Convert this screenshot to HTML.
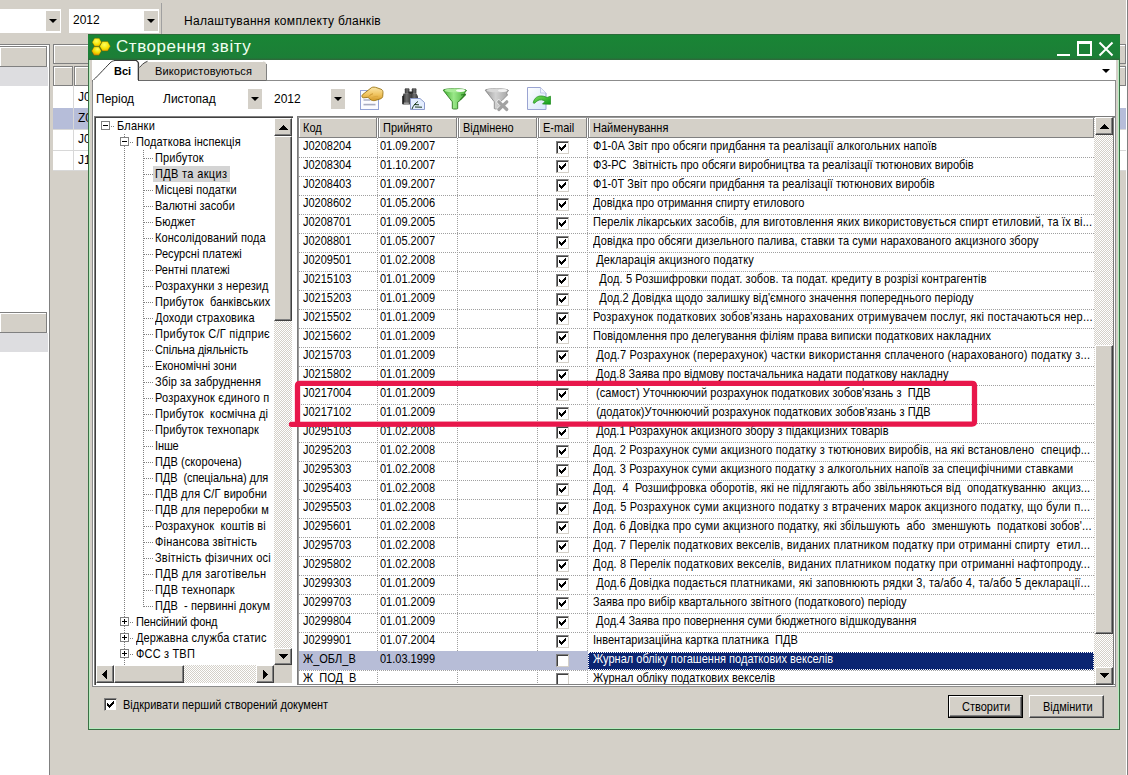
<!DOCTYPE html>
<html><head><meta charset="utf-8">
<style>
*{box-sizing:border-box;margin:0;padding:0}
html,body{width:1128px;height:775px;overflow:hidden;background:#d4d0c8;font-family:"Liberation Sans",sans-serif;font-size:11px;color:#000}
.a{position:absolute}
.t{position:absolute;white-space:pre;line-height:13px}
.sy{transform:scaleY(1.125);transform-origin:0 3px}
.btn3d{position:absolute;background:#d4d0c8;border-top:1px solid #fff;border-left:1px solid #fff;border-right:1px solid #404040;border-bottom:1px solid #404040;box-shadow:inset -1px -1px 0 #808080}
.cb{position:absolute;width:13px;height:13px;background:#fff;border-top:1px solid #808080;border-left:1px solid #808080;border-right:1px solid #d4d0c8;border-bottom:1px solid #d4d0c8;box-shadow:inset 1px 1px 0 #404040}
.cb svg{left:2px!important;top:2px!important}
.dh{position:absolute;height:1px;background-image:linear-gradient(90deg,#a0a0a0 50%,transparent 50%);background-size:2px 1px}
.dv{position:absolute;width:1px;background-image:linear-gradient(180deg,#a0a0a0 50%,transparent 50%);background-size:1px 2px}
.tdv{position:absolute;width:1px;background-image:linear-gradient(180deg,#808080 50%,transparent 50%);background-size:1px 2px}
.tdh{position:absolute;height:1px;background-image:linear-gradient(90deg,#808080 50%,transparent 50%);background-size:2px 1px}
.tri-d{position:absolute;width:0;height:0;border-left:4px solid transparent;border-right:4px solid transparent;border-top:4px solid #000}
.tri-u{position:absolute;width:0;height:0;border-left:4px solid transparent;border-right:4px solid transparent;border-bottom:4px solid #000}
.tri-l{position:absolute;width:0;height:0;border-top:4px solid transparent;border-bottom:4px solid transparent;border-right:4px solid #000}
.tri-r{position:absolute;width:0;height:0;border-top:4px solid transparent;border-bottom:4px solid transparent;border-left:4px solid #000}
.checker{background-color:#fff;background-image:linear-gradient(45deg,#d4d0c8 25%,transparent 25%,transparent 75%,#d4d0c8 75%),linear-gradient(45deg,#d4d0c8 25%,transparent 25%,transparent 75%,#d4d0c8 75%);background-size:2px 2px;background-position:0 0,1px 1px}
</style></head><body>

<div class="a" style="left:0;top:9px;width:61px;height:24px;background:#fff"></div>
<div class="a" style="left:46px;top:11px;width:14px;height:20px;background:#d4d0c8"></div><div class="tri-d" style="left:49px;top:19px"></div>
<div class="a" style="left:69px;top:9px;width:90px;height:24px;background:#fff"></div>
<div class="t" style="left:73px;top:14px;font-size:12px">2012</div>
<div class="a" style="left:144px;top:11px;width:14px;height:20px;background:#d4d0c8"></div><div class="tri-d" style="left:147px;top:19px"></div>
<div class="a" style="left:161px;top:3px;width:1px;height:31px;background:#a0a0a0"></div>
<div class="t" style="left:184px;top:15px;font-size:12px;letter-spacing:0.3px">Налаштування комплекту бланків</div>
<div class="a" style="left:0;top:44px;width:49px;height:731px;background:#fff"></div>
<div class="a" style="left:0;top:44px;width:50px;height:1px;background:#808080"></div>
<div class="a" style="left:49px;top:44px;width:1px;height:731px;background:#808080"></div>
<div class="a" style="left:-1px;top:46px;width:48px;height:21px;background:#d4d0c8;border:1px solid #808080;box-shadow:inset 1px 1px 0 #fff"></div>
<div class="a" style="left:0;top:67px;width:48px;height:19px;background:#dddde0"></div>
<div class="a" style="left:-1px;top:312px;width:48px;height:21px;background:#d4d0c8;border:1px solid #808080;box-shadow:inset 1px 1px 0 #fff"></div>
<div class="a" style="left:0;top:333px;width:48px;height:19px;background:#dddde0"></div>
<div class="a" style="left:53px;top:44px;width:1073px;height:20px;background:#d4d0c8;border:1px solid #808080;box-shadow:inset 1px 1px 0 #fff"></div>
<div class="a" style="left:53px;top:66px;width:20px;height:20px;background:#d4d0c8;border:1px solid #808080;box-shadow:inset 1px 1px 0 #fff"></div>
<div class="a" style="left:74px;top:66px;width:1052px;height:20px;background:#d4d0c8;border:1px solid #808080;box-shadow:inset 1px 1px 0 #fff"></div>
<div class="a" style="left:53px;top:86px;width:1073px;height:85px;background:#fff"></div>
<div class="a" style="left:53px;top:108px;width:1073px;height:22px;background:#b6bdd9"></div>
<div class="a" style="left:53px;top:129px;width:1073px;height:1px;background:#d8d8d8"></div>
<div class="a" style="left:53px;top:150px;width:1073px;height:1px;background:#d8d8d8"></div>
<div class="a" style="left:53px;top:170px;width:1073px;height:1px;background:#d8d8d8"></div>
<div class="a" style="left:73px;top:86px;width:1px;height:85px;background:#d8d8d8"></div>
<div class="t" style="left:78px;top:91px;font-size:12px">J0</div>
<div class="t" style="left:78px;top:112px;font-size:12px">Z0</div>
<div class="t" style="left:78px;top:133px;font-size:12px">J0</div>
<div class="t" style="left:78px;top:154px;font-size:12px">J1</div>
<div class="a" style="left:1126px;top:0;width:1px;height:775px;background:#fff"></div><div class="a" style="left:1127px;top:0;width:1px;height:775px;background:#808080"></div>
<div class="a" style="left:88px;top:34px;width:1032px;height:696px;background:#d4d0c8;border:1px solid #3a7044"></div>
<div class="a" style="left:89px;top:59px;width:1030px;height:670px;border:1px solid #b8ecc0;border-top:none"></div>
<div class="a" style="left:88px;top:34px;width:1032px;height:26px;background:linear-gradient(180deg,#2b6b3a 0px,#2b6b3a 1px,#198535 1px,#1c7e37 24px,#2b6b3a 25px,#2b6b3a 26px)"></div>
<div class="t" style="left:116px;top:38px;font-size:17px;line-height:18px;letter-spacing:0.55px;color:#f0fff0">Створення звіту</div>
<svg class="a" style="left:88px;top:34px" width="26" height="26" viewBox="88 34 26 26">
<defs><radialGradient id="hg" cx="45%" cy="35%" r="75%"><stop offset="0" stop-color="#fbff60"/><stop offset="0.6" stop-color="#f5e000"/><stop offset="1" stop-color="#e89000"/></radialGradient>
<radialGradient id="hg2" cx="60%" cy="30%" r="80%"><stop offset="0" stop-color="#fbff60"/><stop offset="0.5" stop-color="#f5dc00"/><stop offset="1" stop-color="#e87a00"/></radialGradient></defs>
<polygon points="110.40,46.20 107.70,50.88 102.30,50.88 99.60,46.20 102.30,41.52 107.70,41.52" fill="url(#hg)" stroke="#6a5a00" stroke-width="0.7" stroke-opacity="0.6"/>
<polygon points="101.60,42.30 99.25,46.37 94.55,46.37 92.20,42.30 94.55,38.23 99.25,38.23" fill="url(#hg)" stroke="#6a5a00" stroke-width="0.7" stroke-opacity="0.6"/>
<polygon points="101.40,51.00 98.95,55.24 94.05,55.24 91.60,51.00 94.05,46.76 98.95,46.76" fill="url(#hg2)" stroke="#6a5a00" stroke-width="0.7" stroke-opacity="0.6"/>
</svg>
<div class="a" style="left:1057px;top:54px;width:13px;height:2px;background:#fff"></div>
<div class="a" style="left:1077px;top:41px;width:15px;height:15px;border:2px solid #fff;border-top-width:3px"></div>
<svg class="a" style="left:1098px;top:41px" width="16" height="16"><path d="M1.5 1.5L14.5 14.5M14.5 1.5L1.5 14.5" stroke="#fff" stroke-width="2"/></svg>
<div class="a" style="left:92px;top:60px;width:1024px;height:627px;background:#fff"></div>
<div class="a" style="left:92px;top:80px;width:1024px;height:607px;border:1px solid #8c8c8c;border-top:1px solid #8c8c8c"></div>
<svg class="a" style="left:88px;top:58px" width="190" height="26" viewBox="88 58 190 26">
<path d="M92.5 81 C95 79, 105 68, 110 63 C111.5 61.5, 113 60.8, 115 60.5 L138 60.5 L138 81 Z" fill="#fff"/>
<path d="M92.5 80.8 C95 79, 105 68, 110 63 C111.5 61.5, 113 60.8, 115 60.5" stroke="#383838" stroke-width="1" fill="none"/>
<path d="M114 60.5 L136.5 60.5 L138.3 62.5 L138.3 80.5" stroke="#3a3a3a" stroke-width="1.2" fill="none"/><path d="M138.6 63 L138.6 80.5" stroke="#3a3a3a" stroke-width="1" fill="none"/>
<path d="M139 80.5 L139 67.5 C141 65.5, 144 62.5, 147.5 61.5 L263 61.5 Q266.5 61.5 266.5 65 L266.5 80.5 Z" fill="#d4d0c8"/>
<path d="M147.5 61.5 L263 61.5" stroke="#fff" stroke-width="1" fill="none"/>
<path d="M139.5 67.5 C141 65.5, 144 62.5, 147.5 61.3" stroke="#404040" stroke-width="1" fill="none"/>
<path d="M266.5 64 L266.5 80.5" stroke="#808080" stroke-width="1" fill="none"/>
<path d="M139 80.5 L266.5 80.5" stroke="#6a6a6a" stroke-width="1" fill="none"/>
</svg>
<div class="a" style="left:93px;top:80px;width:45px;height:1px;background:#fff"></div>
<div class="t" style="left:114px;top:65px;font-weight:bold">Всі</div>
<div class="t" style="left:155px;top:65px;letter-spacing:0.15px">Використовуються</div>
<div class="tri-d" style="left:1102px;top:69px"></div>
<div class="t" style="left:96px;top:93px;font-size:12px">Період</div>
<div class="t" style="left:163px;top:93px;font-size:12px">Листопад</div>
<div class="a" style="left:248px;top:89px;width:14px;height:20px;background:#d4d0c8"></div><div class="tri-d" style="left:251px;top:97px"></div>
<div class="t" style="left:274px;top:93px;font-size:12px">2012</div>
<div class="a" style="left:331px;top:89px;width:14px;height:20px;background:#d4d0c8"></div><div class="tri-d" style="left:334px;top:97px"></div>
<svg class="a" style="left:356px;top:84px" width="200" height="28" viewBox="356 84 200 28">
<defs>
<linearGradient id="hand" x1="0" y1="0" x2="0" y2="1"><stop offset="0" stop-color="#fbe7a8"/><stop offset="0.55" stop-color="#f0c460"/><stop offset="1" stop-color="#d49a28"/></linearGradient>
<linearGradient id="gfun" x1="0" y1="0" x2="1" y2="0"><stop offset="0" stop-color="#3fae2e"/><stop offset="0.45" stop-color="#9be88a"/><stop offset="1" stop-color="#48b038"/></linearGradient>
<linearGradient id="grfun" x1="0" y1="0" x2="1" y2="0"><stop offset="0" stop-color="#9a9a9a"/><stop offset="0.45" stop-color="#d2d2d2"/><stop offset="1" stop-color="#a4a4a4"/></linearGradient>
<linearGradient id="docb" x1="0" y1="0" x2="1" y2="1"><stop offset="0" stop-color="#ffffff"/><stop offset="1" stop-color="#d6e6fa"/></linearGradient>
<linearGradient id="garr" x1="0" y1="0" x2="1" y2="1"><stop offset="0" stop-color="#7ee05a"/><stop offset="1" stop-color="#0d9a1a"/></linearGradient>
</defs>
<!-- icon1: document with hand -->
<rect x="360.5" y="90.5" width="18" height="19" fill="#fbfcff" stroke="#93a3d6"/>
<rect x="363.5" y="99.3" width="7" height="1.4" fill="#a8acc0"/>
<rect x="363.5" y="103.8" width="12" height="1.6" fill="#a8acc0"/>
<path d="M362 96.8 C361.5 95.5 362.5 94.5 364 93.5 L371.5 87.6 C373 86.8 375 87 377 87.8 L381 89.2 C382.5 89.8 383 91 383 92.5 L382.7 96.5 C382.5 97.8 381.5 98.5 380 99 L376 100.2 C374.5 100.8 373 100.8 371.5 100.2 L369.5 98.8 C369 97.8 368 97.3 367 97.5 L363.5 97.8 C362.8 97.8 362.2 97.4 362 96.8 Z" fill="url(#hand)" stroke="#9a7414" stroke-width="0.9"/>
<path d="M368.8 96.5 C370 95 371.5 94 373 93.8" stroke="#c08a28" stroke-width="0.8" fill="none"/>
<path d="M372.5 97.5 C374 96.5 376 96.3 378 96.5" stroke="#d09a30" stroke-width="0.6" fill="none" opacity="0.7"/>
<!-- icon2: binoculars + doc -->
<defs><linearGradient id="bin" x1="0" y1="0" x2="1" y2="0"><stop offset="0" stop-color="#2e2e2e"/><stop offset="0.5" stop-color="#6e6e6e"/><stop offset="1" stop-color="#3a3a3a"/></linearGradient></defs>
<rect x="404.8" y="88.3" width="4.6" height="5.5" rx="1" fill="url(#bin)"/>
<rect x="411.8" y="88.3" width="4.6" height="5.5" rx="1" fill="url(#bin)"/>
<rect x="408.5" y="91.5" width="4.5" height="3" fill="#2a2a2a"/>
<path d="M403.5 93.5 h6.5 l0.8 2 v9 h-8.2 v-8 z" fill="url(#bin)"/>
<path d="M410.5 93.5 h6 l1.5 3 v3 h-7.5 z" fill="url(#bin)"/>
<rect x="402.3" y="96" width="1.6" height="8" fill="#1e1e1e"/>
<rect x="403.8" y="102.5" width="5" height="2" fill="#9a9a9a"/>
<path d="M410.5 98.5h9.5l4.5 4v7h-14z" fill="#e4eeff" stroke="#8d9ccd" stroke-width="1"/>
<path d="M412 109 C413 106 415.5 103 418 101.5 M414 104.5 L419 104.8 M415 107 L422 107.2" stroke="#1a3a1a" stroke-width="1" fill="none"/>
<!-- icon3: green funnel -->
<path d="M443.2 90.2 C443.5 88.3 466 88.1 466.5 90.5 L464.5 93 L465.5 95 L460 100.5 L457.7 102 V108.6 C457.7 109.2 452.3 109.2 452.3 108.6 V101.8 Z" fill="url(#gfun)" stroke="#2f7e22" stroke-width="0.9"/>
<ellipse cx="455" cy="90.4" rx="10.5" ry="1.9" fill="#a8ec98"/>
<ellipse cx="460.5" cy="90.6" rx="4.5" ry="1.3" fill="#ffffff" opacity="0.9"/>
<path d="M461 95 L465 94.5 L460 100" stroke="#2c7a22" stroke-width="1.1" fill="none"/>
<!-- icon4: gray funnel + X -->
<path d="M485.2 90.2 C485.5 88.3 508 88.1 508.5 90.5 L506.5 93 L507.5 95 L502 100.5 L499.7 102 V108.6 C499.7 109.2 494.3 109.2 494.3 108.6 V101.8 Z" fill="url(#grfun)" stroke="#8a8a8a" stroke-width="0.9"/>
<ellipse cx="497" cy="90.4" rx="10.5" ry="1.9" fill="#d8d8d8"/>
<ellipse cx="502.5" cy="90.6" rx="4.5" ry="1.3" fill="#f4f4f4" opacity="0.9"/>
<path d="M498.8 101.8 L506.8 109.5 M506.8 101.8 L498.8 109.5" stroke="#ffffff" stroke-width="4.6" stroke-linecap="round" opacity="0.7"/>
<path d="M498.8 101.8 L506.8 109.5 M506.8 101.8 L498.8 109.5" stroke="#a2a2a2" stroke-width="3.2" stroke-linecap="round"/>
<!-- icon5: doc + green arrow -->
<path d="M527.5 87.5h13l5.5 5.5v16.5h-18.5z" fill="url(#docb)" stroke="#9aa4d2" stroke-width="1"/>
<path d="M540.5 87.5v5.5h5.5" fill="#f0f4ff" stroke="#b8c0e0" stroke-width="0.8"/>
<path d="M533.3 102.6 C534 98 538 95.5 542 96 C544.5 96.3 546 97 547 97.5 L550.5 96.2 L550.5 104.3 L542.5 104 L545 101.5 C543 99.5 540 99.5 538 100.5 C536.5 101.3 535.5 102.5 535 103 C534.3 103.5 533.2 103.4 533.3 102.6 Z" fill="url(#garr)" stroke="#1a8a1a" stroke-width="0.7"/>
</svg>

<div class="a" style="left:94px;top:116px;width:199px;height:569px;background:#fff;border-top:1px solid #808080;border-left:1px solid #808080;box-shadow:inset 1px 1px 0 #404040"></div>
<div class="a checker" style="left:274px;top:118px;width:18px;height:547px"></div>
<div class="btn3d" style="left:274px;top:118px;width:18px;height:18px"></div><svg class="a" style="left:279px;top:125px" width="9" height="5"><path d="M4 0h1v1h-1zM3 1h3v1h-3zM2 2h5v1h-5zM1 3h7v1h-7zM0 4h9v1h-9z" fill="#000"/></svg>
<div class="btn3d" style="left:274px;top:136px;width:18px;height:185px"></div>
<div class="btn3d" style="left:274px;top:648px;width:18px;height:17px"></div><svg class="a" style="left:279px;top:654px" width="9" height="5"><path d="M0 0h9v1h-9zM1 1h7v1h-7zM2 2h5v1h-5zM3 3h3v1h-3zM4 4h1v1h-1z" fill="#000"/></svg>
<div class="a checker" style="left:96px;top:665px;width:178px;height:18px"></div>
<div class="btn3d" style="left:96px;top:665px;width:18px;height:18px"></div><svg class="a" style="left:102px;top:670px" width="5" height="9"><path d="M4 0h1v9h-1zM3 1h1v7h-1zM2 2h1v5h-1zM1 3h1v3h-1zM0 4h1v1h-1z" fill="#000"/></svg>
<div class="btn3d" style="left:114px;top:665px;width:70px;height:18px"></div>
<div class="btn3d" style="left:256px;top:665px;width:18px;height:18px"></div><svg class="a" style="left:263px;top:670px" width="5" height="9"><path d="M0 0h1v9h-1zM1 1h1v7h-1zM2 2h1v5h-1zM3 3h1v3h-1zM4 4h1v1h-1z" fill="#000"/></svg>
<div class="a" style="left:274px;top:665px;width:18px;height:18px;background:#d4d0c8"></div>
<div class="a" style="left:96px;top:118px;width:178px;height:547px;overflow:hidden">
<div class="tdv" style="left:28px;top:16px;width:1px;height:3px"></div>
<div class="tdv" style="left:28px;top:28px;width:1px;height:524px"></div>
<div class="tdv" style="left:47px;top:32px;width:1px;height:457px"></div>
<div class="t tr sy" style="left:21px;top:1px;letter-spacing:0.226px">Бланки</div>
<div class="a" style="left:5px;top:3px;width:9px;height:9px;border:1px solid #808080;background:#fff"></div>
<div class="a" style="left:7px;top:7px;width:5px;height:1px;background:#000"></div>
<div class="tdh" style="left:15px;top:8px;width:4px"></div>
<div class="t tr sy" style="left:40px;top:17px;letter-spacing:0.107px">Податкова інспекція</div>
<div class="a" style="left:24px;top:19px;width:9px;height:9px;border:1px solid #808080;background:#fff"></div>
<div class="a" style="left:26px;top:23px;width:5px;height:1px;background:#000"></div>
<div class="tdh" style="left:34px;top:24px;width:4px"></div>
<div class="t tr sy" style="left:59px;top:33px;letter-spacing:0.146px">Прибуток</div>
<div class="tdh" style="left:48px;top:40px;width:9px"></div>
<div class="a" style="left:57px;top:48px;width:77px;height:16px;background:#d4d4d4"></div>
<div class="t tr sy" style="left:59px;top:49px;letter-spacing:0.339px">ПДВ та акциз</div>
<div class="tdh" style="left:48px;top:56px;width:9px"></div>
<div class="t tr sy" style="left:59px;top:65px;letter-spacing:0.059px">Місцеві податки</div>
<div class="tdh" style="left:48px;top:72px;width:9px"></div>
<div class="t tr sy" style="left:59px;top:81px;letter-spacing:-0.003px">Валютні засоби</div>
<div class="tdh" style="left:48px;top:88px;width:9px"></div>
<div class="t tr sy" style="left:59px;top:97px;letter-spacing:0.121px">Бюджет</div>
<div class="tdh" style="left:48px;top:104px;width:9px"></div>
<div class="t tr sy" style="left:59px;top:113px;letter-spacing:0.082px">Консолідований пода</div>
<div class="tdh" style="left:48px;top:120px;width:9px"></div>
<div class="t tr sy" style="left:59px;top:129px;letter-spacing:0.052px">Ресурсні платежі</div>
<div class="tdh" style="left:48px;top:136px;width:9px"></div>
<div class="t tr sy" style="left:59px;top:145px;letter-spacing:0.013px">Рентні платежі</div>
<div class="tdh" style="left:48px;top:152px;width:9px"></div>
<div class="t tr sy" style="left:59px;top:161px;letter-spacing:0.126px">Розрахунки з нерезид</div>
<div class="tdh" style="left:48px;top:168px;width:9px"></div>
<div class="t tr sy" style="left:59px;top:177px;letter-spacing:0.130px">Прибуток&nbsp; банківських</div>
<div class="tdh" style="left:48px;top:184px;width:9px"></div>
<div class="t tr sy" style="left:59px;top:193px;letter-spacing:0.108px">Доходи страховика</div>
<div class="tdh" style="left:48px;top:200px;width:9px"></div>
<div class="t tr sy" style="left:59px;top:209px;letter-spacing:0.284px">Прибуток С/Г підприє</div>
<div class="tdh" style="left:48px;top:216px;width:9px"></div>
<div class="t tr sy" style="left:59px;top:225px;letter-spacing:-0.129px">Спільна діяльність</div>
<div class="tdh" style="left:48px;top:232px;width:9px"></div>
<div class="t tr sy" style="left:59px;top:241px;letter-spacing:0.039px">Економічні зони</div>
<div class="tdh" style="left:48px;top:248px;width:9px"></div>
<div class="t tr sy" style="left:59px;top:257px;letter-spacing:0.100px">Збір за забруднення</div>
<div class="tdh" style="left:48px;top:264px;width:9px"></div>
<div class="t tr sy" style="left:59px;top:273px;letter-spacing:0.196px">Розрахунок єдиного п</div>
<div class="tdh" style="left:48px;top:280px;width:9px"></div>
<div class="t tr sy" style="left:59px;top:289px;letter-spacing:0.140px">Прибуток&nbsp; космічна ді</div>
<div class="tdh" style="left:48px;top:296px;width:9px"></div>
<div class="t tr sy" style="left:59px;top:305px;letter-spacing:0.093px">Прибуток технопарк</div>
<div class="tdh" style="left:48px;top:312px;width:9px"></div>
<div class="t tr sy" style="left:59px;top:321px;letter-spacing:-0.126px">Інше</div>
<div class="tdh" style="left:48px;top:328px;width:9px"></div>
<div class="t tr sy" style="left:59px;top:337px;letter-spacing:0.073px">ПДВ (скорочена)</div>
<div class="tdh" style="left:48px;top:344px;width:9px"></div>
<div class="t tr sy" style="left:59px;top:353px;letter-spacing:-0.078px">ПДВ&nbsp; (спеціальна) для</div>
<div class="tdh" style="left:48px;top:360px;width:9px"></div>
<div class="t tr sy" style="left:59px;top:369px;letter-spacing:0.091px">ПДВ для С/Г виробни</div>
<div class="tdh" style="left:48px;top:376px;width:9px"></div>
<div class="t tr sy" style="left:59px;top:385px;letter-spacing:0.098px">ПДВ для переробки м</div>
<div class="tdh" style="left:48px;top:392px;width:9px"></div>
<div class="t tr sy" style="left:59px;top:401px;letter-spacing:0.095px">Розрахунок&nbsp; коштів ві</div>
<div class="tdh" style="left:48px;top:408px;width:9px"></div>
<div class="t tr sy" style="left:59px;top:417px;letter-spacing:0.179px">Фінансова звітність</div>
<div class="tdh" style="left:48px;top:424px;width:9px"></div>
<div class="t tr sy" style="left:59px;top:433px;letter-spacing:0.225px">Звітність фізичних осі</div>
<div class="tdh" style="left:48px;top:440px;width:9px"></div>
<div class="t tr sy" style="left:59px;top:449px;letter-spacing:0.311px">ПДВ для заготівельн</div>
<div class="tdh" style="left:48px;top:456px;width:9px"></div>
<div class="t tr sy" style="left:59px;top:465px;letter-spacing:0.204px">ПДВ технопарк</div>
<div class="tdh" style="left:48px;top:472px;width:9px"></div>
<div class="t tr sy" style="left:59px;top:481px;letter-spacing:0.062px">ПДВ&nbsp; - первинні докум</div>
<div class="tdh" style="left:48px;top:488px;width:9px"></div>
<div class="t tr sy" style="left:40px;top:497px;letter-spacing:-0.137px">Пенсійний фонд</div>
<div class="a" style="left:24px;top:499px;width:9px;height:9px;border:1px solid #808080;background:#fff"></div>
<div class="a" style="left:26px;top:503px;width:5px;height:1px;background:#000"></div>
<div class="a" style="left:28px;top:501px;width:1px;height:5px;background:#000"></div>
<div class="tdh" style="left:34px;top:504px;width:4px"></div>
<div class="t tr sy" style="left:40px;top:513px;letter-spacing:0.139px">Державна служба статис</div>
<div class="a" style="left:24px;top:515px;width:9px;height:9px;border:1px solid #808080;background:#fff"></div>
<div class="a" style="left:26px;top:519px;width:5px;height:1px;background:#000"></div>
<div class="a" style="left:28px;top:517px;width:1px;height:5px;background:#000"></div>
<div class="tdh" style="left:34px;top:520px;width:4px"></div>
<div class="t tr sy" style="left:40px;top:529px;letter-spacing:0.178px">ФСС з ТВП</div>
<div class="a" style="left:24px;top:531px;width:9px;height:9px;border:1px solid #808080;background:#fff"></div>
<div class="a" style="left:26px;top:535px;width:5px;height:1px;background:#000"></div>
<div class="a" style="left:28px;top:533px;width:1px;height:5px;background:#000"></div>
<div class="tdh" style="left:34px;top:536px;width:4px"></div>
</div>
<div class="a" style="left:297px;top:116px;width:818px;height:569px;background:#fff;border-top:1px solid #7a7a7a;border-left:1px solid #7a7a7a;border-bottom:1px solid #808080;box-shadow:inset 1px 1px 0 #9a9a9a"></div>
<div class="a" style="left:298px;top:118px;width:79px;height:20px;background:#d4d0c8;border-left:1px solid #808080;border-right:1px solid #808080;border-bottom:1px solid #808080;box-shadow:inset 1px 1px 0 #fff"></div>
<div class="t sy" style="left:303px;top:121px">Код</div>
<div class="a" style="left:378px;top:118px;width:79px;height:20px;background:#d4d0c8;border-left:1px solid #808080;border-right:1px solid #808080;border-bottom:1px solid #808080;box-shadow:inset 1px 1px 0 #fff"></div>
<div class="t sy" style="left:383px;top:121px">Прийнято</div>
<div class="a" style="left:458px;top:118px;width:79px;height:20px;background:#d4d0c8;border-left:1px solid #808080;border-right:1px solid #808080;border-bottom:1px solid #808080;box-shadow:inset 1px 1px 0 #fff"></div>
<div class="t sy" style="left:463px;top:121px">Відмінено</div>
<div class="a" style="left:538px;top:118px;width:49px;height:20px;background:#d4d0c8;border-left:1px solid #808080;border-right:1px solid #808080;border-bottom:1px solid #808080;box-shadow:inset 1px 1px 0 #fff"></div>
<div class="t sy" style="left:543px;top:121px">E-mail</div>
<div class="a" style="left:588px;top:118px;width:506px;height:20px;background:#d4d0c8;border-left:1px solid #808080;border-right:1px solid #808080;border-bottom:1px solid #808080;box-shadow:inset 1px 1px 0 #fff"></div>
<div class="t sy" style="left:593px;top:121px">Найменування</div>
<div class="a" style="left:299px;top:138px;width:796px;height:546px;overflow:hidden">
<div class="dv" style="left:78px;top:0px;height:546px"></div>
<div class="dv" style="left:158px;top:0px;height:546px"></div>
<div class="dv" style="left:238px;top:0px;height:546px"></div>
<div class="dv" style="left:288px;top:0px;height:546px"></div>
<div class="dh" style="left:0px;top:19px;width:795px"></div>
<div class="dh" style="left:0px;top:38px;width:795px"></div>
<div class="dh" style="left:0px;top:57px;width:795px"></div>
<div class="dh" style="left:0px;top:76px;width:795px"></div>
<div class="dh" style="left:0px;top:95px;width:795px"></div>
<div class="dh" style="left:0px;top:114px;width:795px"></div>
<div class="dh" style="left:0px;top:133px;width:795px"></div>
<div class="dh" style="left:0px;top:152px;width:795px"></div>
<div class="dh" style="left:0px;top:171px;width:795px"></div>
<div class="dh" style="left:0px;top:190px;width:795px"></div>
<div class="dh" style="left:0px;top:209px;width:795px"></div>
<div class="dh" style="left:0px;top:228px;width:795px"></div>
<div class="dh" style="left:0px;top:247px;width:795px"></div>
<div class="dh" style="left:0px;top:266px;width:795px"></div>
<div class="dh" style="left:0px;top:285px;width:795px"></div>
<div class="dh" style="left:0px;top:304px;width:795px"></div>
<div class="dh" style="left:0px;top:323px;width:795px"></div>
<div class="dh" style="left:0px;top:342px;width:795px"></div>
<div class="dh" style="left:0px;top:361px;width:795px"></div>
<div class="dh" style="left:0px;top:380px;width:795px"></div>
<div class="dh" style="left:0px;top:399px;width:795px"></div>
<div class="dh" style="left:0px;top:418px;width:795px"></div>
<div class="dh" style="left:0px;top:437px;width:795px"></div>
<div class="dh" style="left:0px;top:456px;width:795px"></div>
<div class="dh" style="left:0px;top:475px;width:795px"></div>
<div class="dh" style="left:0px;top:494px;width:795px"></div>
<div class="dh" style="left:0px;top:513px;width:795px"></div>
<div class="dh" style="left:0px;top:532px;width:795px"></div>
<div class="a" style="left:0px;top:513px;width:289px;height:19px;background:#b7bdd7"></div>
<div class="a" style="left:289px;top:513px;width:506px;height:1px;background:#fff"></div>
<div class="a" style="left:289px;top:514px;width:506px;height:18px;background:#0b2572"></div>
<div class="a" style="left:289px;top:514px;width:506px;height:18px;border:1px dotted #fff"></div>
<div class="dh" style="left:0px;top:551px;width:795px"></div>
<div class="t sy" style="left:4px;top:1px">J0208204</div>
<div class="t sy" style="left:81px;top:1px">01.09.2007</div>
<div class="cb" style="left:257px;top:3px"><svg width="7" height="7" style="position:absolute;left:3px;top:3px"><path d="M6 0h1v3h-1zM5 1h1v3h-1zM4 2h1v3h-1zM3 3h1v3h-1zM2 4h1v3h-1zM1 3h1v3h-1zM0 2h1v3h-1z" fill="#000"/></svg></div>
<div class="t nm sy" style="left:294px;top:1px;color:#000;letter-spacing:0.054px">Ф1-0А Звіт про обсяги придбання та реалізації алкогольних напоїв</div>
<div class="t sy" style="left:4px;top:20px">J0208304</div>
<div class="t sy" style="left:81px;top:20px">01.10.2007</div>
<div class="cb" style="left:257px;top:22px"><svg width="7" height="7" style="position:absolute;left:3px;top:3px"><path d="M6 0h1v3h-1zM5 1h1v3h-1zM4 2h1v3h-1zM3 3h1v3h-1zM2 4h1v3h-1zM1 3h1v3h-1zM0 2h1v3h-1z" fill="#000"/></svg></div>
<div class="t nm sy" style="left:294px;top:20px;color:#000;letter-spacing:0.015px">Ф3-РС&nbsp; Звітність про обсяги виробництва та реалізації тютюнових виробів</div>
<div class="t sy" style="left:4px;top:39px">J0208403</div>
<div class="t sy" style="left:81px;top:39px">01.09.2007</div>
<div class="cb" style="left:257px;top:41px"><svg width="7" height="7" style="position:absolute;left:3px;top:3px"><path d="M6 0h1v3h-1zM5 1h1v3h-1zM4 2h1v3h-1zM3 3h1v3h-1zM2 4h1v3h-1zM1 3h1v3h-1zM0 2h1v3h-1z" fill="#000"/></svg></div>
<div class="t nm sy" style="left:294px;top:39px;color:#000;letter-spacing:0.052px">Ф1-0Т Звіт про обсяги придбання та реалізації тютюнових виробів</div>
<div class="t sy" style="left:4px;top:58px">J0208602</div>
<div class="t sy" style="left:81px;top:58px">01.05.2006</div>
<div class="cb" style="left:257px;top:60px"><svg width="7" height="7" style="position:absolute;left:3px;top:3px"><path d="M6 0h1v3h-1zM5 1h1v3h-1zM4 2h1v3h-1zM3 3h1v3h-1zM2 4h1v3h-1zM1 3h1v3h-1zM0 2h1v3h-1z" fill="#000"/></svg></div>
<div class="t nm sy" style="left:294px;top:58px;color:#000;letter-spacing:0.029px">Довідка про отримання спирту етилового</div>
<div class="t sy" style="left:4px;top:77px">J0208701</div>
<div class="t sy" style="left:81px;top:77px">01.09.2005</div>
<div class="cb" style="left:257px;top:79px"><svg width="7" height="7" style="position:absolute;left:3px;top:3px"><path d="M6 0h1v3h-1zM5 1h1v3h-1zM4 2h1v3h-1zM3 3h1v3h-1zM2 4h1v3h-1zM1 3h1v3h-1zM0 2h1v3h-1z" fill="#000"/></svg></div>
<div class="t nm sy" style="left:294px;top:77px;color:#000;letter-spacing:0.154px">Перелік лікарських засобів, для виготовлення яких використовується спирт етиловий, та їх ві...</div>
<div class="t sy" style="left:4px;top:96px">J0208801</div>
<div class="t sy" style="left:81px;top:96px">01.05.2007</div>
<div class="cb" style="left:257px;top:98px"><svg width="7" height="7" style="position:absolute;left:3px;top:3px"><path d="M6 0h1v3h-1zM5 1h1v3h-1zM4 2h1v3h-1zM3 3h1v3h-1zM2 4h1v3h-1zM1 3h1v3h-1zM0 2h1v3h-1z" fill="#000"/></svg></div>
<div class="t nm sy" style="left:294px;top:96px;color:#000;letter-spacing:0.102px">Довідка про обсяги дизельного палива, ставки та суми нарахованого акцизного збору</div>
<div class="t sy" style="left:4px;top:115px">J0209501</div>
<div class="t sy" style="left:81px;top:115px">01.02.2008</div>
<div class="cb" style="left:257px;top:117px"><svg width="7" height="7" style="position:absolute;left:3px;top:3px"><path d="M6 0h1v3h-1zM5 1h1v3h-1zM4 2h1v3h-1zM3 3h1v3h-1zM2 4h1v3h-1zM1 3h1v3h-1zM0 2h1v3h-1z" fill="#000"/></svg></div>
<div class="t nm sy" style="left:294px;top:115px;color:#000;letter-spacing:0.123px">&nbsp;Декларація акцизного податку</div>
<div class="t sy" style="left:4px;top:134px">J0215103</div>
<div class="t sy" style="left:81px;top:134px">01.01.2009</div>
<div class="cb" style="left:257px;top:136px"><svg width="7" height="7" style="position:absolute;left:3px;top:3px"><path d="M6 0h1v3h-1zM5 1h1v3h-1zM4 2h1v3h-1zM3 3h1v3h-1zM2 4h1v3h-1zM1 3h1v3h-1zM0 2h1v3h-1z" fill="#000"/></svg></div>
<div class="t nm sy" style="left:294px;top:134px;color:#000;letter-spacing:0.117px">&nbsp;&nbsp;Дод. 5 Розшифровки подат. зобов. та подат. кредиту в розрізі контрагентів</div>
<div class="t sy" style="left:4px;top:153px">J0215203</div>
<div class="t sy" style="left:81px;top:153px">01.01.2009</div>
<div class="cb" style="left:257px;top:155px"><svg width="7" height="7" style="position:absolute;left:3px;top:3px"><path d="M6 0h1v3h-1zM5 1h1v3h-1zM4 2h1v3h-1zM3 3h1v3h-1zM2 4h1v3h-1zM1 3h1v3h-1zM0 2h1v3h-1z" fill="#000"/></svg></div>
<div class="t nm sy" style="left:294px;top:153px;color:#000;letter-spacing:0.092px">&nbsp;&nbsp;Дод.2 Довідка щодо залишку від'ємного значення попереднього періоду</div>
<div class="t sy" style="left:4px;top:172px">J0215502</div>
<div class="t sy" style="left:81px;top:172px">01.01.2009</div>
<div class="cb" style="left:257px;top:174px"><svg width="7" height="7" style="position:absolute;left:3px;top:3px"><path d="M6 0h1v3h-1zM5 1h1v3h-1zM4 2h1v3h-1zM3 3h1v3h-1zM2 4h1v3h-1zM1 3h1v3h-1zM0 2h1v3h-1z" fill="#000"/></svg></div>
<div class="t nm sy" style="left:294px;top:172px;color:#000;letter-spacing:0.224px">Розрахунок податкових зобов'язань нарахованих отримувачем послуг, які постачаються нер...</div>
<div class="t sy" style="left:4px;top:191px">J0215602</div>
<div class="t sy" style="left:81px;top:191px">01.01.2009</div>
<div class="cb" style="left:257px;top:193px"><svg width="7" height="7" style="position:absolute;left:3px;top:3px"><path d="M6 0h1v3h-1zM5 1h1v3h-1zM4 2h1v3h-1zM3 3h1v3h-1zM2 4h1v3h-1zM1 3h1v3h-1zM0 2h1v3h-1z" fill="#000"/></svg></div>
<div class="t nm sy" style="left:294px;top:191px;color:#000;letter-spacing:0.076px">Повідомлення про делегування філіям права виписки податкових накладних</div>
<div class="t sy" style="left:4px;top:210px">J0215703</div>
<div class="t sy" style="left:81px;top:210px">01.01.2009</div>
<div class="cb" style="left:257px;top:212px"><svg width="7" height="7" style="position:absolute;left:3px;top:3px"><path d="M6 0h1v3h-1zM5 1h1v3h-1zM4 2h1v3h-1zM3 3h1v3h-1zM2 4h1v3h-1zM1 3h1v3h-1zM0 2h1v3h-1z" fill="#000"/></svg></div>
<div class="t nm sy" style="left:294px;top:210px;color:#000;letter-spacing:0.209px">&nbsp;Дод.7 Розрахунок (перерахунок) частки використання сплаченого (нарахованого) податку з...</div>
<div class="t sy" style="left:4px;top:229px">J0215802</div>
<div class="t sy" style="left:81px;top:229px">01.01.2009</div>
<div class="cb" style="left:257px;top:231px"><svg width="7" height="7" style="position:absolute;left:3px;top:3px"><path d="M6 0h1v3h-1zM5 1h1v3h-1zM4 2h1v3h-1zM3 3h1v3h-1zM2 4h1v3h-1zM1 3h1v3h-1zM0 2h1v3h-1z" fill="#000"/></svg></div>
<div class="t nm sy" style="left:294px;top:229px;color:#000;letter-spacing:0.053px">&nbsp;Дод.8 Заява про відмову постачальника надати податкову накладну</div>
<div class="t sy" style="left:4px;top:248px">J0217004</div>
<div class="t sy" style="left:81px;top:248px">01.01.2009</div>
<div class="cb" style="left:257px;top:250px"><svg width="7" height="7" style="position:absolute;left:3px;top:3px"><path d="M6 0h1v3h-1zM5 1h1v3h-1zM4 2h1v3h-1zM3 3h1v3h-1zM2 4h1v3h-1zM1 3h1v3h-1zM0 2h1v3h-1z" fill="#000"/></svg></div>
<div class="t nm sy" style="left:294px;top:248px;color:#000;letter-spacing:0.049px">&nbsp;(самост) Уточнюючий розрахунок податкових зобов'язань з&nbsp; ПДВ</div>
<div class="t sy" style="left:4px;top:267px">J0217102</div>
<div class="t sy" style="left:81px;top:267px">01.01.2009</div>
<div class="cb" style="left:257px;top:269px"><svg width="7" height="7" style="position:absolute;left:3px;top:3px"><path d="M6 0h1v3h-1zM5 1h1v3h-1zM4 2h1v3h-1zM3 3h1v3h-1zM2 4h1v3h-1zM1 3h1v3h-1zM0 2h1v3h-1z" fill="#000"/></svg></div>
<div class="t nm sy" style="left:294px;top:267px;color:#000;letter-spacing:0.076px">&nbsp;(додаток)Уточнюючий розрахунок податкових зобов'язань з ПДВ</div>
<div class="t sy" style="left:4px;top:286px">J0295103</div>
<div class="t sy" style="left:81px;top:286px">01.02.2008</div>
<div class="cb" style="left:257px;top:288px"><svg width="7" height="7" style="position:absolute;left:3px;top:3px"><path d="M6 0h1v3h-1zM5 1h1v3h-1zM4 2h1v3h-1zM3 3h1v3h-1zM2 4h1v3h-1zM1 3h1v3h-1zM0 2h1v3h-1z" fill="#000"/></svg></div>
<div class="t nm sy" style="left:294px;top:286px;color:#000;letter-spacing:0.080px">&nbsp;Дод.1 Розрахунок акцизного збору з підакцизних товарів</div>
<div class="t sy" style="left:4px;top:305px">J0295203</div>
<div class="t sy" style="left:81px;top:305px">01.02.2008</div>
<div class="cb" style="left:257px;top:307px"><svg width="7" height="7" style="position:absolute;left:3px;top:3px"><path d="M6 0h1v3h-1zM5 1h1v3h-1zM4 2h1v3h-1zM3 3h1v3h-1zM2 4h1v3h-1zM1 3h1v3h-1zM0 2h1v3h-1z" fill="#000"/></svg></div>
<div class="t nm sy" style="left:294px;top:305px;color:#000;letter-spacing:0.158px">Дод. 2 Розрахунок суми акцизного податку з тютюнових виробів, на які встановлено&nbsp; специф...</div>
<div class="t sy" style="left:4px;top:324px">J0295303</div>
<div class="t sy" style="left:81px;top:324px">01.02.2008</div>
<div class="cb" style="left:257px;top:326px"><svg width="7" height="7" style="position:absolute;left:3px;top:3px"><path d="M6 0h1v3h-1zM5 1h1v3h-1zM4 2h1v3h-1zM3 3h1v3h-1zM2 4h1v3h-1zM1 3h1v3h-1zM0 2h1v3h-1z" fill="#000"/></svg></div>
<div class="t nm sy" style="left:294px;top:324px;color:#000;letter-spacing:0.139px">Дод. 3 Розрахунок суми акцизного податку з алкогольних напоїв за специфічними ставками</div>
<div class="t sy" style="left:4px;top:343px">J0295403</div>
<div class="t sy" style="left:81px;top:343px">01.02.2008</div>
<div class="cb" style="left:257px;top:345px"><svg width="7" height="7" style="position:absolute;left:3px;top:3px"><path d="M6 0h1v3h-1zM5 1h1v3h-1zM4 2h1v3h-1zM3 3h1v3h-1zM2 4h1v3h-1zM1 3h1v3h-1zM0 2h1v3h-1z" fill="#000"/></svg></div>
<div class="t nm sy" style="left:294px;top:343px;color:#000;letter-spacing:0.068px">Дод.&nbsp; 4&nbsp; Розшифровка оборотів, які не підлягають або звільняються від&nbsp; оподаткуванню&nbsp; акциз...</div>
<div class="t sy" style="left:4px;top:362px">J0295503</div>
<div class="t sy" style="left:81px;top:362px">01.02.2008</div>
<div class="cb" style="left:257px;top:364px"><svg width="7" height="7" style="position:absolute;left:3px;top:3px"><path d="M6 0h1v3h-1zM5 1h1v3h-1zM4 2h1v3h-1zM3 3h1v3h-1zM2 4h1v3h-1zM1 3h1v3h-1zM0 2h1v3h-1z" fill="#000"/></svg></div>
<div class="t nm sy" style="left:294px;top:362px;color:#000;letter-spacing:0.241px">Дод. 5 Розрахунок суми акцизного податку з втрачених марок акцизного податку, що були п...</div>
<div class="t sy" style="left:4px;top:381px">J0295601</div>
<div class="t sy" style="left:81px;top:381px">01.02.2008</div>
<div class="cb" style="left:257px;top:383px"><svg width="7" height="7" style="position:absolute;left:3px;top:3px"><path d="M6 0h1v3h-1zM5 1h1v3h-1zM4 2h1v3h-1zM3 3h1v3h-1zM2 4h1v3h-1zM1 3h1v3h-1zM0 2h1v3h-1z" fill="#000"/></svg></div>
<div class="t nm sy" style="left:294px;top:381px;color:#000;letter-spacing:0.124px">Дод. 6 Довідка про суми акцизного податку, які збільшують&nbsp; або&nbsp; зменшують&nbsp; податкові зобов'...</div>
<div class="t sy" style="left:4px;top:400px">J0295703</div>
<div class="t sy" style="left:81px;top:400px">01.02.2008</div>
<div class="cb" style="left:257px;top:402px"><svg width="7" height="7" style="position:absolute;left:3px;top:3px"><path d="M6 0h1v3h-1zM5 1h1v3h-1zM4 2h1v3h-1zM3 3h1v3h-1zM2 4h1v3h-1zM1 3h1v3h-1zM0 2h1v3h-1z" fill="#000"/></svg></div>
<div class="t nm sy" style="left:294px;top:400px;color:#000;letter-spacing:0.178px">Дод. 7 Перелік податкових векселів, виданих платником податку при отриманні спирту&nbsp; етил...</div>
<div class="t sy" style="left:4px;top:419px">J0295802</div>
<div class="t sy" style="left:81px;top:419px">01.02.2008</div>
<div class="cb" style="left:257px;top:421px"><svg width="7" height="7" style="position:absolute;left:3px;top:3px"><path d="M6 0h1v3h-1zM5 1h1v3h-1zM4 2h1v3h-1zM3 3h1v3h-1zM2 4h1v3h-1zM1 3h1v3h-1zM0 2h1v3h-1z" fill="#000"/></svg></div>
<div class="t nm sy" style="left:294px;top:419px;color:#000;letter-spacing:0.214px">Дод. 8 Перелік податкових векселів, виданих платником податку при отриманні нафтопроду...</div>
<div class="t sy" style="left:4px;top:438px">J0299303</div>
<div class="t sy" style="left:81px;top:438px">01.01.2009</div>
<div class="cb" style="left:257px;top:440px"><svg width="7" height="7" style="position:absolute;left:3px;top:3px"><path d="M6 0h1v3h-1zM5 1h1v3h-1zM4 2h1v3h-1zM3 3h1v3h-1zM2 4h1v3h-1zM1 3h1v3h-1zM0 2h1v3h-1z" fill="#000"/></svg></div>
<div class="t nm sy" style="left:294px;top:438px;color:#000;letter-spacing:0.168px">&nbsp;Дод.6 Довідка подається платниками, які заповнюють рядки 3, та/або 4, та/або 5 декларації...</div>
<div class="t sy" style="left:4px;top:457px">J0299703</div>
<div class="t sy" style="left:81px;top:457px">01.01.2009</div>
<div class="cb" style="left:257px;top:459px"><svg width="7" height="7" style="position:absolute;left:3px;top:3px"><path d="M6 0h1v3h-1zM5 1h1v3h-1zM4 2h1v3h-1zM3 3h1v3h-1zM2 4h1v3h-1zM1 3h1v3h-1zM0 2h1v3h-1z" fill="#000"/></svg></div>
<div class="t nm sy" style="left:294px;top:457px;color:#000;letter-spacing:0.062px">Заява про вибір квартального звітного (податкового) періоду</div>
<div class="t sy" style="left:4px;top:476px">J0299804</div>
<div class="t sy" style="left:81px;top:476px">01.01.2009</div>
<div class="cb" style="left:257px;top:478px"><svg width="7" height="7" style="position:absolute;left:3px;top:3px"><path d="M6 0h1v3h-1zM5 1h1v3h-1zM4 2h1v3h-1zM3 3h1v3h-1zM2 4h1v3h-1zM1 3h1v3h-1zM0 2h1v3h-1z" fill="#000"/></svg></div>
<div class="t nm sy" style="left:294px;top:476px;color:#000;letter-spacing:0.040px">&nbsp;Дод.4 Заява про повернення суми бюджетного відшкодування</div>
<div class="t sy" style="left:4px;top:495px">J0299901</div>
<div class="t sy" style="left:81px;top:495px">01.07.2004</div>
<div class="cb" style="left:257px;top:497px"><svg width="7" height="7" style="position:absolute;left:3px;top:3px"><path d="M6 0h1v3h-1zM5 1h1v3h-1zM4 2h1v3h-1zM3 3h1v3h-1zM2 4h1v3h-1zM1 3h1v3h-1zM0 2h1v3h-1z" fill="#000"/></svg></div>
<div class="t nm sy" style="left:294px;top:495px;color:#000;letter-spacing:0.038px">Інвентаризаційна картка платника&nbsp; ПДВ</div>
<div class="t sy" style="left:4px;top:514px">Ж_ОБЛ_В</div>
<div class="t sy" style="left:81px;top:514px">01.03.1999</div>
<div class="cb" style="left:257px;top:516px"></div>
<div class="t nm sy" style="left:294px;top:514px;color:#fff;letter-spacing:0.023px">Журнал обліку погашення податкових векселів</div>
<div class="t sy" style="left:4px;top:533px">Ж_ПОД_В</div>
<div class="cb" style="left:257px;top:535px"></div>
<div class="t nm sy" style="left:294px;top:533px;color:#000;letter-spacing:0.032px">Журнал обліку податкових векселів</div>
</div>
<div class="a checker" style="left:1094px;top:118px;width:19px;height:566px"></div>
<div class="btn3d" style="left:1095px;top:117px;width:18px;height:18px"></div><svg class="a" style="left:1100px;top:124px" width="9" height="5"><path d="M4 0h1v1h-1zM3 1h3v1h-3zM2 2h5v1h-5zM1 3h7v1h-7zM0 4h9v1h-9z" fill="#000"/></svg>
<div class="btn3d" style="left:1095px;top:345px;width:18px;height:289px"></div>
<div class="btn3d" style="left:1095px;top:667px;width:18px;height:18px"></div><svg class="a" style="left:1100px;top:673px" width="9" height="5"><path d="M0 0h9v1h-9zM1 1h7v1h-7zM2 2h5v1h-5zM3 3h3v1h-3zM4 4h1v1h-1z" fill="#000"/></svg>
<div class="a" style="left:1113px;top:116px;width:1px;height:569px;background:#7a7a7a"></div>
<div class="cb" style="left:104px;top:698px"><svg width="7" height="7" style="position:absolute;left:3px;top:3px"><path d="M6 0h1v3h-1zM5 1h1v3h-1zM4 2h1v3h-1zM3 3h1v3h-1zM2 4h1v3h-1zM1 3h1v3h-1zM0 2h1v3h-1z" fill="#000"/></svg></div>
<div class="t sy" style="left:123px;top:698px">Відкривати перший створений документ</div>
<div class="a" style="left:948px;top:695px;width:75px;height:23px;border:1px solid #000;background:#d4d0c8"></div>
<div class="btn3d" style="left:949px;top:696px;width:73px;height:21px"></div>
<div class="t sy" style="left:962px;top:700px">Створити</div>
<div class="btn3d" style="left:1029px;top:695px;width:75px;height:23px"></div>
<div class="t sy" style="left:1043px;top:700px">Відмінити</div>
<svg class="a" style="left:0;top:0" width="1128" height="775"><path d="M297.5 424 L297.5 385.5 Q297.5 383.3 300 383.3 L972 383.3 Q974.5 383.3 974.5 386 L974.5 421.5 Q974.5 424 972 424 L291.5 424.3" stroke="#e8174b" stroke-width="5.3" fill="none" stroke-linejoin="round" stroke-linecap="round"/></svg>
</body></html>
